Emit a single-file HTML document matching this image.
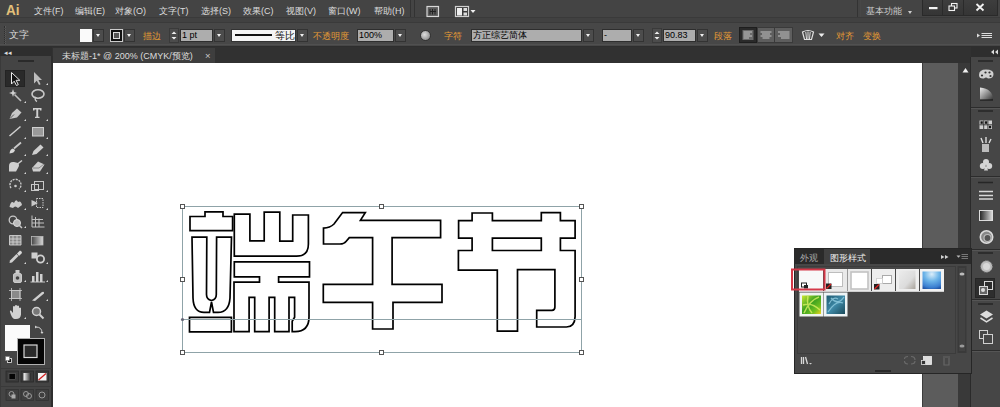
<!DOCTYPE html>
<html><head><meta charset="utf-8">
<style>
*{margin:0;padding:0;box-sizing:border-box}
html,body{width:1000px;height:407px;overflow:hidden;background:#424242;font-family:"Liberation Sans",sans-serif;position:relative;color:#d8d8d8}
.a{position:absolute}
.t{position:absolute;font-size:9.5px;line-height:12px;white-space:nowrap;color:#dcdcdc}
.or{color:#e39a35;font-size:9px}
.inp{position:absolute;background:#adadad;border:1px solid #2e2e2e;height:13px;top:29px;font-size:9px;line-height:11px;color:#000;padding-left:1px;white-space:nowrap}
.dd{position:absolute;top:29px;width:11px;height:13px;background:#4c4c4c;border:1px solid #333}
.dd:after{content:"";position:absolute;left:2px;top:4px;border-left:2.5px solid transparent;border-right:2.5px solid transparent;border-top:3.5px solid #f0f0f0}
.sep{position:absolute;top:24px;width:1px;height:22px;background:#383838;border-right:1px solid #4e4e4e}
</style></head><body>

<!-- ===== menu bar ===== -->
<div class="a" style="left:0;top:0;width:1000px;height:17px;background:#444444"></div>
<div class="a" style="left:0;top:17px;width:1000px;height:5px;background:#414141;border-top:1px solid #3a3a3a"></div>
<div class="t" style="left:6px;top:3px;font-size:15px;line-height:14px;font-weight:bold;color:#e3c079;transform:scaleX(0.9);transform-origin:0 0">Ai</div>
<div class="t" style="left:34px;top:5px;font-size:9px">文件(F)</div>
<div class="t" style="left:75px;top:5px;font-size:9px">编辑(E)</div>
<div class="t" style="left:115px;top:5px;font-size:9px">对象(O)</div>
<div class="t" style="left:159px;top:5px;font-size:9px">文字(T)</div>
<div class="t" style="left:201px;top:5px;font-size:9px">选择(S)</div>
<div class="t" style="left:243px;top:5px;font-size:9px">效果(C)</div>
<div class="t" style="left:286px;top:5px;font-size:9px">视图(V)</div>
<div class="t" style="left:328px;top:5px;font-size:9px">窗口(W)</div>
<div class="t" style="left:374px;top:5px;font-size:9px">帮助(H)</div>
<div class="a" style="left:410px;top:0;width:1px;height:17px;background:#333"></div>
<div class="a" style="left:414px;top:0;width:1px;height:17px;background:#333"></div>
<svg class="a" style="left:420px;top:0" width="60" height="18" viewBox="420 0 60 18">
<rect x="427" y="6.5" width="11.5" height="10" fill="#5a5a5a" stroke="#d8d8d8" stroke-width="1.2"/>
<path d="M430,9 V14.5 M432.5,9 V14.5 M435,9 V14.5 M430,11.5 H436" stroke="#222" stroke-width="1"/>
<rect x="455.5" y="6.5" width="13" height="10" fill="#3a3a3a" stroke="#d0d0d0" stroke-width="1.2"/>
<rect x="457" y="8" width="5" height="7.5" fill="#eee"/>
<rect x="463.5" y="8" width="3.5" height="3" fill="#ddd"/><rect x="463.5" y="12.5" width="3.5" height="3" fill="#ddd"/>
<path d="M470.5,10 h5 l-2.5,3z" fill="#f0f0f0"/>
</svg>
<div class="t" style="left:866px;top:5px;font-size:9px;color:#cfcfcf">基本功能</div>
<div class="a" style="left:908px;top:11px;border-left:2px solid transparent;border-right:2px solid transparent;border-top:3px solid #ccc"></div>
<!-- window buttons -->
<div class="a" style="left:857px;top:0;width:1px;height:17px;background:#333"></div>
<div class="a" style="left:860px;top:0;width:1px;height:17px;background:#474747"></div>
<svg class="a" style="left:920px;top:0" width="80" height="18" viewBox="920 0 80 18">
<defs><linearGradient id="wb" x1="0" y1="0" x2="0" y2="1"><stop offset="0" stop-color="#3e3e3e"/><stop offset="1" stop-color="#353535"/></linearGradient></defs>
<rect x="922.5" y="-1" width="75" height="16.5" fill="url(#wb)" stroke="#2a2a2a"/>
<path d="M942.5,0 V15 M963.5,0 V15" stroke="#2a2a2a"/>
<rect x="929" y="7" width="8.5" height="2.2" fill="#f2f2f2"/>
<rect x="951.5" y="3.5" width="5.5" height="4.5" fill="none" stroke="#f2f2f2" stroke-width="1.1"/>
<rect x="949" y="6" width="5.5" height="4.5" fill="#3a3a3a" stroke="#f2f2f2" stroke-width="1.1"/>
<path d="M976.5,4 L983.5,10.5 M983.5,4 L976.5,10.5" stroke="#f2f2f2" stroke-width="1.8"/>
</svg>

<!-- ===== control bar ===== -->
<div class="a" style="left:0;top:22px;width:1000px;height:25px;background:#474747;border-top:1px solid #3a3a3a;border-bottom:1px solid #2e2e2e"></div>
<div class="a" style="left:0;top:44px;width:1000px;height:1px;background:#505050"></div>
<div class="a" style="left:4px;top:26px;width:2px;height:18px;border-left:1px dotted #2e2e2e;border-right:1px dotted #5a5a5a"></div>
<div class="t" style="left:9px;top:29px">文字</div>
<div class="a" style="left:80px;top:29px;width:12px;height:13px;background:#fafafa"></div>
<div class="dd" style="left:93px"></div>
<div class="a" style="left:110px;top:29px;width:13px;height:13px;background:#111;border:1px solid #ccc"></div>
<div class="a" style="left:113px;top:32px;width:7px;height:7px;border:1px solid #ddd;background:#555"></div>
<div class="dd" style="left:124px"></div>
<div class="t or" style="left:143px;top:30px">描边</div>
<svg class="a" style="left:168px;top:28px" width="12" height="16" viewBox="168 28 12 16"><rect x="169.5" y="28.5" width="9" height="14" fill="#4c4c4c" stroke="#3a3a3a"/><path d="M171.5,34 h5 l-2.5,-2.5z M171.5,37 h5 l-2.5,2.5z" fill="#eee"/></svg>
<div class="inp" style="left:180px;width:33px">1 pt</div>
<div class="dd" style="left:214px"></div>
<div class="a" style="left:231px;top:29px;width:65px;height:13px;background:#f4f4f4;border:1px solid #333"></div>
<div class="a" style="left:235px;top:34px;width:37px;height:2px;background:#111"></div>
<div class="t" style="left:275px;top:30px;color:#111">等比</div>
<div class="dd" style="left:297px"></div>
<div class="t or" style="left:313px;top:30px">不透明度</div>
<div class="inp" style="left:357px;width:37px">100%</div>
<div class="dd" style="left:395px"></div>
<div class="a" style="left:420px;top:30px;width:11px;height:11px;border-radius:50%;background:radial-gradient(circle at 40% 40%,#ddd,#777);border:1px solid #333"></div>
<div class="t or" style="left:444px;top:30px">字符</div>
<div class="inp" style="left:471px;width:111px">方正综艺简体</div>
<div class="dd" style="left:583px"></div>
<div class="inp" style="left:602px;width:30px">-</div>
<div class="dd" style="left:633px"></div>
<svg class="a" style="left:651px;top:28px" width="12" height="16" viewBox="651 28 12 16"><rect x="652.5" y="28.5" width="9" height="14" fill="#4c4c4c" stroke="#3a3a3a"/><path d="M654.5,34 h5 l-2.5,-2.5z M654.5,37 h5 l-2.5,2.5z" fill="#eee"/></svg>
<div class="inp" style="left:663px;width:33px">90.83</div>
<div class="dd" style="left:697px"></div>
<div class="t or" style="left:714px;top:30px">段落</div>
<svg class="a" style="left:735px;top:22px" width="100" height="26" viewBox="735 22 100 26">
<rect x="739.5" y="27.5" width="17" height="15" fill="#2a2a2a" stroke="#1e1e1e"/>
<rect x="742.5" y="30" width="11" height="10" fill="#6a6a6a"/>
<path d="M743.5,32 H752 M743.5,34 H750 M743.5,36 H752 M743.5,38 H749" stroke="#cfcfcf" stroke-width="0.9"/>
<rect x="757.5" y="27.5" width="17" height="15" fill="#5e5e5e" stroke="#3a3a3a"/>
<path d="M760.5,32 H771.5 M762,34 H770 M760.5,36 H771.5 M762.5,38 H769.5" stroke="#d0d0d0" stroke-width="0.9"/>
<rect x="774.5" y="27.5" width="18" height="15" fill="#5e5e5e" stroke="#3a3a3a"/>
<path d="M778,32 H789.5 M780,34 H789.5 M778,36 H789.5 M781,38 H789.5" stroke="#d0d0d0" stroke-width="0.9"/>
<path d="M802.5,32 Q808,29 813.5,32 L811.5,39.5 H804.5 Z" fill="none" stroke="#e0e0e0" stroke-width="1.2"/>
<path d="M805.8,32 L806.5,39 M808,31.5 V39 M810.2,32 L809.5,39" stroke="#e0e0e0" stroke-width="1"/>
<path d="M818.5,33.5 h6 l-3,3.5z" fill="#eee"/>
</svg>
<div class="t or" style="left:836px;top:30px">对齐</div>
<div class="t or" style="left:863px;top:30px">变换</div>
<svg class="a" style="left:975px;top:30px" width="20" height="12" viewBox="975 30 20 12"><path d="M977,33.5 l3,2 l-3,2z" fill="#ddd"/><path d="M981.5,33.5 H992 M981.5,35.5 H992 M981.5,37.5 H992" stroke="#ddd" stroke-width="1"/></svg>

<!-- ===== tab row ===== -->
<div class="a" style="left:0;top:47px;width:1000px;height:16px;background:#313131"></div>
<div class="a" style="left:53px;top:48px;width:162px;height:15px;background:#3e3e3e"></div>
<div class="t" style="left:62px;top:50px;color:#dcdcdc;font-size:9px">未标题-1* @ 200% (CMYK/预览)</div>
<div class="t" style="left:205px;top:50px;color:#ccc">×</div>

<!-- ===== left toolbar ===== -->
<div class="a" style="left:0;top:47px;width:52px;height:9px;background:#2e2e2e"></div>
<div class="t" style="left:4px;top:47px;font-size:7px;color:#ddd">◂◂</div>
<div class="a" style="left:0;top:56px;width:53px;height:351px;background:#444444;border-left:1px solid #3a3a3a;border-right:2px solid #2e2e2e"></div>
<div class="a" style="left:18px;top:60px;width:16px;height:2px;background:#2a2a2a"></div>


<svg class="a" style="left:0;top:0" width="52" height="407" viewBox="0 0 52 407">
<rect x="5.5" y="70.5" width="19" height="16" fill="#2a2a2a" stroke="#232323"/>
<g fill="#d8d8d8" stroke="none">
<!-- small triangles -->
<path d="M46,85 l2,-2 v2z M24,103 l2,-2 v2z M24,121 l2,-2 v2z M46,121 l2,-2 v2z M24,139 l2,-2 v2z M46,139 l2,-2 v2z M24,156 l2,-2 v2z M46,156 l2,-2 v2z M24,174 l2,-2 v2z M46,174 l2,-2 v2z M24,192 l2,-2 v2z M46,192 l2,-2 v2z M24,210 l2,-2 v2z M46,210 l2,-2 v2z M24,228 l2,-2 v2z M24,264 l2,-2 v2z M46,264 l2,-2 v2z M24,282 l2,-2 v2z M46,282 l2,-2 v2z M46,301 l2,-2 v2z M24,319 l2,-2 v2z"/>
</g>
<!-- selection -->
<path d="M11.5,72.5 V84 L14.2,81.2 L16.5,85.5 L18.3,84.6 L16.1,80.3 H19.8 Z" fill="#111" stroke="#e8e8e8" stroke-width="1"/>
<!-- direct selection -->
<path d="M34,72 V83.5 L36.8,80.8 L39,85 L40.6,84.2 L38.5,80 H42 Z" fill="#bdbdbd"/>
<!-- magic wand -->
<path d="M13,89 L14,92 L17,93 L14,94 L13,97 L12,94 L9,93 L12,92 Z" fill="#d0d0d0"/>
<path d="M14.5,94.5 L21,101" stroke="#c0c0c0" stroke-width="1.6"/>
<!-- lasso -->
<ellipse cx="38" cy="94" rx="6" ry="4.2" fill="none" stroke="#c8c8c8" stroke-width="1.6"/>
<path d="M36,97 Q34,100 37,101.5" fill="none" stroke="#c8c8c8" stroke-width="1.4"/>
<!-- pen -->
<path d="M9.5,119 L12,113 L17,108.5 L21.5,112.5 L17,117.5 Z" fill="#c8c8c8"/>
<path d="M10,118.5 L14,114.5" stroke="#555" stroke-width="1"/>
<!-- type -->
<path d="M33,108 H41.5 V110.5 H40 V109.5 H38.2 V116.8 H39.5 V118 H35 V116.8 H36.3 V109.5 H34.5 V110.5 H33 Z" fill="#d0d0d0"/>
<!-- line -->
<path d="M9.5,136 L20.5,126.5" stroke="#cfcfcf" stroke-width="1.5"/>
<!-- rect -->
<rect x="32.5" y="127.5" width="11" height="8.5" fill="#9a9a9a" stroke="#d0d0d0" stroke-width="1"/>
<!-- brush -->
<path d="M14,148.5 L21,142.5" stroke="#cacaca" stroke-width="1.8"/>
<path d="M9.5,153.5 Q10,149 13,148.5 L15,150 Q14.5,153 9.5,153.5Z" fill="#d8d8d8"/>
<!-- pencil -->
<path d="M32,155 L33.5,151 L40.5,144.5 L43.5,147.5 L36.5,154 Z" fill="#cfcfcf"/>
<!-- blob brush -->
<path d="M9,166 Q9,161.5 14,162 L18,163 Q20,165 18,168 L16,171.5 H9 Z" fill="#cfcfcf"/>
<path d="M15,166 L22,160.5" stroke="#cfcfcf" stroke-width="1.5"/>
<!-- eraser -->
<path d="M32,168 L38,161.5 L44.5,164.5 L40,171.5 L33,171.5 Z" fill="#cfcfcf"/>
<path d="M33,168 L39,168 L44,164" fill="none" stroke="#777" stroke-width="0.8"/>
<!-- rotate -->
<path d="M11,188 A5.5,5.5 0 1 1 19,189" fill="none" stroke="#c8c8c8" stroke-width="1.4" stroke-dasharray="2 1"/>
<circle cx="15.5" cy="186" r="1.3" fill="#ccc"/>
<!-- scale -->
<rect x="31.5" y="184.5" width="7" height="6" fill="none" stroke="#c8c8c8"/>
<rect x="34.5" y="181.5" width="9" height="8" fill="none" stroke="#c8c8c8"/>
<!-- warp -->
<path d="M9.5,207 Q11,200 14,203 Q16,198 18,202 Q21,200 22,205 L18,208 Q15,205 13,208 Z" fill="#cacaca"/>
<!-- free transform -->
<path d="M31.5,200 L38,203 L31.5,206.5 Z" fill="#c8c8c8"/>
<rect x="36.5" y="198.5" width="6.5" height="9" fill="none" stroke="#c8c8c8" stroke-dasharray="1.5 1"/>
<!-- shape builder -->
<circle cx="13" cy="220" r="3.8" fill="none" stroke="#c8c8c8" stroke-width="1.3"/>
<circle cx="17" cy="223" r="3.5" fill="#bbb" stroke="#ddd" stroke-width="1"/>
<path d="M19,225 L22,228" stroke="#c8c8c8" stroke-width="1.5"/>
<!-- perspective grid -->
<path d="M32,215.5 V227 H44.5 M35.5,217 V227 M39,218.5 V227 M32,219.5 H43 M32,223 H44" fill="none" stroke="#c2c2c2" stroke-width="1"/>
<!-- mesh -->
<path d="M9.5,235.5 H21 V245 H9.5 Z M13,235.5 V245 M17,235.5 V245 M9.5,239 H21 M9.5,242 H21" fill="#888" stroke="#d0d0d0" stroke-width="0.9"/>
<!-- gradient -->
<defs><linearGradient id="gt" x1="0" x2="1"><stop offset="0" stop-color="#444"/><stop offset="1" stop-color="#d8d8d8"/></linearGradient>
<linearGradient id="gm" x1="0" x2="1"><stop offset="0" stop-color="#fff"/><stop offset="1" stop-color="#222"/></linearGradient></defs>
<rect x="31.5" y="236.5" width="11.5" height="8.5" fill="url(#gt)" stroke="#bbb" stroke-width="0.8"/>
<!-- eyedropper -->
<path d="M9.5,263 L10,260.5 L16.5,254 L18.5,256 L12,262.5 Z" fill="#cfcfcf"/>
<path d="M17,253.5 L20,250.5 Q22,251 22,253 L19,256Z" fill="#d8d8d8"/>
<!-- blend -->
<rect x="31.5" y="252.5" width="6" height="6" fill="#cfcfcf"/>
<circle cx="40.5" cy="259" r="3.6" fill="none" stroke="#cfcfcf" stroke-width="1.8"/>
<!-- symbol sprayer -->
<rect x="13.5" y="273.5" width="8" height="9" rx="1.5" fill="#bdbdbd" stroke="#ddd" stroke-width="0.8"/>
<rect x="15.5" y="270" width="4" height="3" fill="#ccc"/>
<circle cx="17.5" cy="278" r="1.8" fill="#444"/>
<!-- graph -->
<path d="M30.5,282 H45" stroke="#c8c8c8"/>
<rect x="32" y="276" width="2.5" height="6" fill="#d0d0d0"/><rect x="36" y="272" width="2.5" height="10" fill="#d0d0d0"/><rect x="40" y="274" width="2.5" height="8" fill="#d0d0d0"/>
<!-- artboard -->
<rect x="11.5" y="290.5" width="8.5" height="8" fill="#8a8a8a" stroke="#ccc" stroke-width="0.8"/>
<path d="M9,290.5 H22 M9,298.5 H22 M11.5,288 V301 M20,288 V301" stroke="#c8c8c8" stroke-width="0.8"/>
<!-- slice -->
<path d="M32,300.5 L42,292 Q44.5,291 44,293.5 L35,301 Z" fill="#cfcfcf"/>
<!-- hand -->
<path d="M10,312 Q9.5,310 11,310.5 L13,313 V306.5 Q14,305.5 15,306.5 V311 V305.5 Q16,304.5 17,305.5 V311 V306 Q18,305 19,306 V311.5 V308 Q20,307 21,308 V314.5 Q20.5,319 16,319 H14.5 Q12,319 10,312 Z" fill="#d2d2d2"/>
<!-- zoom -->
<circle cx="36.5" cy="311.5" r="4" fill="#777" stroke="#d0d0d0" stroke-width="1.5"/>
<path d="M39.5,314.5 L43.5,318.5" stroke="#d0d0d0" stroke-width="2"/>
<!-- fill/stroke -->
<rect x="5" y="325" width="25" height="26" fill="#fbfbfb"/>
<rect x="17.5" y="338.5" width="27" height="26" fill="#050505" stroke="#b0b0b0" stroke-width="1"/>
<rect x="24" y="345" width="13" height="12.5" fill="#2a2a2a" stroke="#d8d8d8" stroke-width="1.2"/>
<path d="M36,327 Q42,327 42,333" fill="none" stroke="#d0d0d0" stroke-width="1"/>
<path d="M35,325.5 L37,327 L35,328.5Z M40.5,332 L42,334 L43.5,332Z" fill="#d0d0d0"/>
<rect x="7.5" y="358.5" width="4" height="4" fill="#111" stroke="#eee" stroke-width="0.8"/>
<rect x="5.5" y="356.5" width="4" height="4" fill="#fff" stroke="#777" stroke-width="0.6"/>
<path d="M0,368.5 H52" stroke="#3a3a3a"/>
<rect x="6" y="371" width="12.5" height="11" fill="#3a3a3a" stroke="#2a2a2a" stroke-width="0.8"/>
<rect x="9" y="373.5" width="6.5" height="6" fill="#050505" stroke="#666" stroke-width="0.6"/>
<rect x="21" y="371" width="12.5" height="11" fill="#3a3a3a" stroke="#2a2a2a" stroke-width="0.8"/>
<rect x="23.5" y="373" width="7.5" height="7.5" fill="url(#gm)"/>
<rect x="36" y="371" width="12.5" height="11" fill="#3a3a3a" stroke="#2a2a2a" stroke-width="0.8"/>
<rect x="38" y="373" width="8.5" height="7.5" fill="#f4f4f4"/>
<path d="M38.5,380 L46,373.5" stroke="#d02020" stroke-width="1.3"/>
<path d="M0,386.5 H52" stroke="#3a3a3a"/>
<rect x="6" y="389.5" width="12.5" height="11" fill="#3f3f3f" stroke="#333" stroke-width="0.8"/>
<rect x="21" y="389.5" width="12.5" height="11" fill="#3f3f3f" stroke="#333" stroke-width="0.8"/>
<rect x="36" y="389.5" width="12.5" height="11" fill="#3f3f3f" stroke="#333" stroke-width="0.8"/>
<circle cx="11.5" cy="394" r="2.5" fill="none" stroke="#999" stroke-width="1"/><rect x="11.5" y="394.5" width="4" height="4" fill="#aaa"/>
<circle cx="26" cy="394" r="2.5" fill="none" stroke="#999" stroke-width="1"/><circle cx="29" cy="396" r="2.5" fill="none" stroke="#999" stroke-width="1"/>
<circle cx="42" cy="395" r="3" fill="none" stroke="#999" stroke-width="1"/>
</svg>

<!-- ===== canvas ===== -->
<div class="a" style="left:53px;top:63px;width:905px;height:344px;background:#5c5c5c"></div>
<div class="a" style="left:53px;top:63px;width:869px;height:344px;background:#ffffff"></div>
<div class="a" style="left:922px;top:63px;width:1px;height:344px;background:#3c3c3c"></div>
<div class="a" style="left:958px;top:63px;width:13px;height:344px;background:#393939"></div>


<!-- ===== artwork ===== -->
<svg class="a" style="left:0;top:0" width="1000" height="407" viewBox="0 0 1000 407">
<g fill="none" stroke="#000" stroke-width="1.7" stroke-linejoin="miter">
<path d="M190,216.5 H205 V211.8 H223 V216.5 H232.6 V230.6 H190 Z"/>
<path d="M192,237.2 H206.8 L206.5,294.5 Q206.5,299.5 211.5,300.5 Q216.3,299.5 216.3,294.5 L216.6,237.2 H231.5 L230,298 Q229,312.4 218,312.4 H213.5 L211.5,302 L209.5,312.4 H204 Q193.5,312.4 193,298 Z"/>
<path d="M189.5,317.3 H231.4 V331.8 H189.5 Z"/>
<path d="M234.3,214.2 H249.9 V240.9 H264.2 V212.1 H279.8 V241.2 H292.7 V215 H308.4 V244 Q308.4,256.2 296.5,256.2 H234.3 Z"/>
<path d="M234.3,261.8 H309.5 V276.8 H278.6 V282.2 H309 V317 Q309,331.6 295,331.6 H292.2 V321.3 L294.6,317.3 V297.3 H289 V331.6 H274.7 V297.3 H269.1 V331.6 H254.7 V297.3 H249.1 V331.6 H234 V282.2 H259.5 V276.8 H234.3 Z"/>
<path d="M342.6,212.6 H365.3 L360.4,220.4 H440.6 V237.6 H392.1 V284.3 H442 V302.4 H393 V329 H372.6 V302.4 H323.3 V284.3 H372.6 V237.6 H349.3 L346,241.5 Q344,244 340,244 H323.5 V228.1 Q330,228 334,224 Z"/>
<path d="M458.6,220.7 H472.1 V213 H492.4 V220.7 H541.3 V212.6 H560.4 V220.7 H575.1 V238.2 H560.4 V250.5 H575.1 V316.6 Q574.7,327 566.4,327 H536.7 V310.3 H552 Q554.9,310.3 554.9,307 V269.6 H517.5 V331.2 H497.3 V270.2 H458.4 V250.5 H472.1 V238.2 H458.6 Z M492.4,238.2 H541.3 V250.5 H492.4 Z"/>
</g>
<g fill="none" stroke="#8fa3a8" stroke-width="1">
<rect x="182.5" y="206.5" width="399" height="146"/>
<line x1="182.5" y1="319.5" x2="581.5" y2="319.5"/>
</g>
<g fill="#fff" stroke="#555" stroke-width="1">
<rect x="180.5" y="204.5" width="4" height="4"/><rect x="379.5" y="204.5" width="4" height="4"/><rect x="579.5" y="204.5" width="4" height="4"/>
<rect x="180.5" y="277.5" width="4" height="4"/><rect x="579.5" y="277.5" width="4" height="4"/>
<rect x="180.5" y="350.5" width="4" height="4"/><rect x="379.5" y="350.5" width="4" height="4"/><rect x="579.5" y="350.5" width="4" height="4"/>
</g>
<circle cx="182.5" cy="319.5" r="1.6" fill="#667"/>
</svg>

<!-- ===== right dock ===== -->
<div class="a" style="left:971px;top:47px;width:29px;height:10px;background:#2e2e2e"></div>
<div class="a" style="left:970px;top:57px;width:30px;height:350px;background:#464646;border-left:1px solid #2a2a2a"></div>
<svg class="a" style="left:966px;top:0" width="34" height="407" viewBox="966 0 34 407">
<defs>
<linearGradient id="dq" x1="0" y1="0" x2="1" y2="1"><stop offset="0" stop-color="#eee"/><stop offset="1" stop-color="#333"/></linearGradient>
<linearGradient id="dg" x1="0" x2="1"><stop offset="0" stop-color="#222"/><stop offset="1" stop-color="#ddd"/></linearGradient>
</defs>
<path d="M991,52 l3,-2.5 v5z M995,52 l3,-2.5 v5z" fill="#ddd"/>
<!-- separators & grips -->
<g stroke="#2c2c2c" stroke-width="1">
<path d="M971,107.5 H1000 M971,176.5 H1000 M971,249.5 H1000 M971,299.5 H1000 M971,350.5 H1000"/>
</g>
<g stroke="#262626" stroke-width="1.5">
<path d="M978,61 H993 M978,111 H993 M978,182.5 H993 M978,253 H993 M978,304 H993"/>
</g>
<g stroke="#555" stroke-width="1"><path d="M971,108.5 H1000 M971,177.5 H1000 M971,250.5 H1000 M971,300.5 H1000 M971,351.5 H1000"/></g>
<!-- palette -->
<path d="M979,75 Q979,69.5 986,69.5 Q993.5,69.5 993.5,74 Q993.5,78.5 988,78.5 Q986,76.5 984,78.5 Q979,79 979,75Z" fill="#d0d0d0"/>
<circle cx="982" cy="75.5" r="1.1" fill="#333"/><circle cx="985.5" cy="72.5" r="1.1" fill="#333"/><circle cx="989.5" cy="72.5" r="1.1" fill="#333"/><circle cx="990.5" cy="76" r="1.1" fill="#333"/>
<!-- color quarter -->
<path d="M980,100 V87.5 Q993,88.5 993,100 Z" fill="url(#dq)"/>
<path d="M980,100 H993" stroke="#111" stroke-width="1"/>
<!-- swatches -->
<rect x="979.5" y="120.5" width="12.5" height="8.5" fill="#cfcfcf"/>
<path d="M983.7,120.5 V129 M987.9,120.5 V129 M979.5,124.8 H992" stroke="#333" stroke-width="0.9"/>
<rect x="980.5" y="121.3" width="2.3" height="2.5" fill="#111"/><rect x="984.8" y="121.3" width="2.3" height="2.5" fill="#111"/><rect x="988.9" y="125.8" width="2.3" height="2.5" fill="#111"/>
<!-- brushes -->
<rect x="982" y="144" width="7" height="8" fill="#bbb"/>
<path d="M983,143 L981,138 M986,143 V137 M989,143 L991,139" stroke="#ddd" stroke-width="1.4"/>
<!-- symbols club -->
<circle cx="986" cy="162" r="3" fill="#d4d4d4"/><circle cx="982.8" cy="166" r="3" fill="#d4d4d4"/><circle cx="989.2" cy="166" r="3" fill="#d4d4d4"/>
<path d="M985,167 L984,170.5 H988 L987,167Z" fill="#d4d4d4"/>
<!-- stroke -->
<path d="M979,191.5 H993 M979,195.5 H993 M979,199 H993" stroke="#d8d8d8" stroke-width="1.6"/>
<!-- gradient -->
<rect x="979.5" y="210.5" width="13" height="10" fill="url(#dg)" stroke="#ddd" stroke-width="1"/>
<!-- transparency -->
<circle cx="986.5" cy="237" r="6.2" fill="#888" stroke="#dcdcdc" stroke-width="1.6"/>
<circle cx="987.5" cy="238" r="3.5" fill="#555" stroke="#bbb" stroke-width="1.2"/>
<!-- appearance -->
<circle cx="986.5" cy="266.5" r="5.8" fill="#bdbdbd" stroke="#888" stroke-width="1" stroke-dasharray="1.5 1"/>
<circle cx="986.5" cy="266.5" r="3.5" fill="#d8d8d8"/>
<!-- graphic styles selected -->
<rect x="975.5" y="278.5" width="19" height="19" fill="#2e2e2e" stroke="#262626"/>
<rect x="984.5" y="281.5" width="8" height="8" fill="none" stroke="#d8d8d8"/>
<rect x="979.5" y="286.5" width="8" height="8" fill="#666" stroke="#d8d8d8"/>
<circle cx="983" cy="290" r="2" fill="#ddd"/>
<!-- layers -->
<path d="M986.5,310.5 L993,314.5 L986.5,318.5 L980,314.5Z" fill="#dcdcdc"/>
<path d="M980.5,318 L986.5,321.8 L992.5,318" fill="none" stroke="#dcdcdc" stroke-width="1.5"/>
<!-- artboards -->
<rect x="979.5" y="330.5" width="8" height="8" fill="none" stroke="#d0d0d0"/>
<rect x="983.5" y="334.5" width="9" height="9" fill="#464646" stroke="#d0d0d0"/>
</svg>
<!-- ===== floating panel ===== -->
<svg class="a" style="left:958px;top:63px" width="13" height="20" viewBox="958 63 13 20"><path d="M962.5,72.5 L965.5,68 L968.5,72.5Z" fill="#f0f0f0"/></svg>
<div class="a" style="left:794px;top:248px;width:178px;height:126px;background:#474747;border:1px solid #262626"></div>
<div class="a" style="left:794px;top:249px;width:177px;height:15px;background:#2a2a2a"></div>
<div class="a" style="left:824px;top:249px;width:46px;height:15px;background:#404040"></div>
<div class="t" style="left:800px;top:252px;color:#a8a8a8;font-size:9px">外观</div>
<div class="t" style="left:830px;top:252px;color:#ececec;font-size:9px">图形样式</div>
<svg class="a" style="left:780px;top:240px" width="200" height="140" viewBox="780 240 200 140">
<defs>
<radialGradient id="pb" cx="0.5" cy="0.15" r="0.9"><stop offset="0" stop-color="#dceefa"/><stop offset="0.45" stop-color="#6cb4e8"/><stop offset="0.85" stop-color="#3a7ed0"/><stop offset="1" stop-color="#2458a8"/></radialGradient>
<linearGradient id="pg" x1="0" y1="0" x2="1" y2="1"><stop offset="0" stop-color="#ececec"/><stop offset="0.6" stop-color="#dcdcdc"/><stop offset="1" stop-color="#a8a29a"/></linearGradient>
<linearGradient id="pgr" x1="0" y1="0" x2="1" y2="1"><stop offset="0" stop-color="#cde830"/><stop offset="0.45" stop-color="#3aa020"/><stop offset="0.75" stop-color="#70c020"/><stop offset="1" stop-color="#f0d020"/></linearGradient>
<linearGradient id="ptl" x1="0" y1="0" x2="1" y2="1"><stop offset="0" stop-color="#1e5a70"/><stop offset="0.5" stop-color="#3f8aa8"/><stop offset="1" stop-color="#1a4a5a"/></linearGradient>
</defs>
<path d="M941,255 l3.5,2 l-3.5,2z M945,255 l3.5,2 l-3.5,2z" fill="#d0d0d0"/>
<path d="M956.5,255.5 h4 l-2,2.2z" fill="#bbb"/><path d="M961.5,254.5 H968 M961.5,256.5 H968 M961.5,258.5 H968" stroke="#777" stroke-width="1"/>
<!-- list border -->
<rect x="797.5" y="266.5" width="158" height="87" fill="none" stroke="#3c3c3c"/>
<!-- scrollbar -->
<rect x="957.5" y="266" width="9" height="87" fill="#3a3a3a"/>
<rect x="959" y="268" width="6" height="83" fill="#424242"/>
<ellipse cx="962" cy="274" rx="2.5" ry="1.5" fill="#bbb"/>
<ellipse cx="962" cy="346" rx="2.5" ry="1.5" fill="#999"/>
<!-- row 1 -->
<rect x="799" y="269" width="24" height="23" fill="#f8f8f8"/>
<rect x="801.5" y="283" width="5" height="4" fill="#fff" stroke="#222" stroke-width="1"/><rect x="804" y="285" width="4" height="3.5" fill="#222"/>
<rect x="824" y="269" width="23.5" height="23" fill="#e9e9e9"/>
<rect x="828.5" y="272.5" width="14" height="14" fill="#fff" stroke="#bdbdbd" stroke-width="1"/>
<rect x="826" y="283.5" width="5.5" height="5.5" fill="#222"/><path d="M826.5,288.5 L831,284" stroke="#e02020" stroke-width="1.3"/>
<rect x="848" y="269" width="23" height="23" fill="#e9e9e9"/>
<rect x="851" y="272" width="17" height="17" fill="#fff" stroke="#c2c2c2" stroke-width="1.6"/>
<rect x="872" y="269" width="23" height="23" fill="#ededed"/>
<rect x="882.5" y="275.5" width="9" height="8" fill="#fff" stroke="#aaa" stroke-width="1"/>
<rect x="876.5" y="278.5" width="6" height="5" fill="#fff" stroke="#ccc" stroke-width="0.8"/>
<rect x="874" y="284" width="5.5" height="5.5" fill="#222"/><path d="M874.5,289 L879,284.5" stroke="#e02020" stroke-width="1.3"/>
<rect x="896" y="269" width="23" height="23" fill="#eeeeee"/>
<rect x="899" y="270.5" width="16.5" height="18.5" fill="url(#pg)"/>
<rect x="920" y="269" width="24" height="23" fill="#f2f2f2"/>
<rect x="922.5" y="271.5" width="18.5" height="17.5" fill="url(#pb)"/>
<path d="M799,291.5 H944" stroke="#cfcfcf" stroke-width="1"/>
<!-- row 2 -->
<rect x="799.5" y="292.5" width="24" height="24" fill="#f0f4f0"/>
<rect x="802" y="295.5" width="19" height="18.5" fill="url(#pgr)"/>
<path d="M804,313 Q810,300 819,297 M803,305 Q812,302 820,310 M808,296 Q806,306 812,313" fill="none" stroke="#d8f060" stroke-width="1.5" opacity="0.8"/>
<rect x="824" y="292.5" width="23.5" height="24" fill="#eef4f6"/>
<rect x="826.5" y="295.5" width="18.5" height="18.5" fill="url(#ptl)"/>
<path d="M828,312 Q836,300 843,303 M831,298 Q838,306 844,297 M829,304 Q833,296 838,299" fill="none" stroke="#8cc8dc" stroke-width="1.3" opacity="0.85"/>
<!-- red highlight -->
<rect x="792" y="269.5" width="32.5" height="20" fill="none" stroke="#d43848" stroke-width="2"/>
<!-- footer -->
<path d="M801.5,357 V364 M803.5,357 V364 M805.5,357 L807.5,364" stroke="#d8d8d8" stroke-width="1.3"/>
<path d="M809,363 h3 l-1.5,1.6z" fill="#ccc"/>
<path d="M904.5,359 Q904.5,356.5 908,356.5 M904.5,361 Q904.5,364 908,364 M911,356.5 Q915,356.5 915,360 M911,364 Q915,364 915,361" fill="none" stroke="#6a6a6a" stroke-width="1.2"/>
<rect x="923.5" y="356.5" width="8" height="8" fill="#ddd" stroke="#eee" stroke-width="0.8"/>
<rect x="921.5" y="360.5" width="4" height="4" fill="#333" stroke="#ddd" stroke-width="0.8"/>
<path d="M943,357 H950 M944,358 V365 H949 V358" fill="none" stroke="#666" stroke-width="1.2"/>
<path d="M875,371 H891" stroke="#222" stroke-width="1.6"/>
</svg>
</body></html>
